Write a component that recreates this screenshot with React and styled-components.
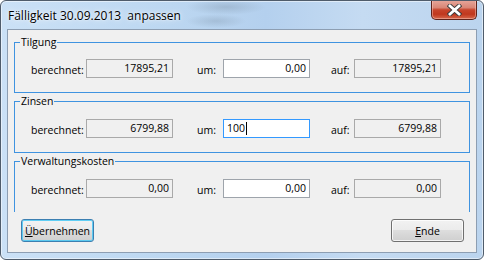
import React from "react";
import styled, { createGlobalStyle } from "styled-components";

const GlobalStyle = createGlobalStyle`
  html, body { margin: 0; padding: 0; background: #ffffff; }
  body { font-family: "Open Sans", "Noto Sans", sans-serif; color: #000; }
  * { box-sizing: border-box; }
`;

const Window = styled.div`
  width: 484px;
  height: 260px;
  display: flex;
  flex-direction: column;
  padding: 0 6px 6px;
  border: 1px solid #4f5c6b;
  border-radius: 6px;
  overflow: hidden;
  background:
    radial-gradient(ellipse 40px 8px at 225px 6px, rgba(120,140,160,0.35), rgba(120,140,160,0) 100%),
    radial-gradient(ellipse 30px 7px at 215px 20px, rgba(120,140,160,0.3), rgba(120,140,160,0) 100%),
    linear-gradient(90deg, #cbe1f6 0%, #bcd7f1 35%, #b4d0ee 55%, #c5dbf2 75%, #bbd4ee 100%);
  box-shadow: inset 0 0 0 1px rgba(255, 255, 255, 0.5);
`;

const TitleBar = styled.div`
  height: 28px;
  display: flex;
  align-items: center;
`;

const Title = styled.div`
  margin-left: 1px;
  margin-top: 1px;
  font-size: 12px;
  white-space: pre;
  text-shadow: 0 0 6px rgba(255, 255, 255, 0.95), 0 0 2px rgba(255, 255, 255, 0.9);
`;

const CloseButton = styled.div`
  margin-left: auto;
  align-self: flex-start;
  margin-top: -1px;
  width: 46px;
  height: 20px;
  display: flex;
  align-items: center;
  justify-content: center;
  border: 1px solid #5e231b;
  border-top: none;
  border-radius: 0 0 5px 5px;
  background: linear-gradient(
    180deg,
    #e7a89c 0%,
    #d98676 40%,
    #c7442b 52%,
    #c0381e 75%,
    #d6684c 100%
  );
  box-shadow: inset 0 0 0 1px rgba(255, 210, 200, 0.45);
`;

const Client = styled.div`
  flex: 1;
  display: flex;
  flex-direction: column;
  border: 1px solid #8d9eb2;
  background: #f0f0f0;
  padding-top: 5px;
`;

const GroupsPanel = styled.div`
  height: 177px;
  overflow: hidden;
  padding: 0 6px;
  display: flex;
  flex-direction: column;
`;

const Group = styled.fieldset`
  margin: 0 0 1px;
  padding: 0;
  min-width: 0;
  border: 1px solid #3f93e0;
  flex-shrink: 0;
`;

const Legend = styled.legend`
  margin-left: 5px;
  padding: 0 1px;
  font-size: 10.5px;
  line-height: 15px;
  height: 15px;
`;

const Row = styled.div`
  display: grid;
  grid-template-columns: 71px 87px 50px 87px 44px 87px;
  align-items: center;
  padding: ${(p) => p.$top}px 0 14px;
`;

const Label = styled.span`
  padding-left: ${(p) => p.$indent}px;
  padding-top: 3px;
  font-size: 10.5px;
  line-height: 14px;
  white-space: nowrap;
`;

const ReadBox = styled.div`
  height: 19px;
  border: 1px solid #a9a9a9;
  background: #f0f0f0;
  text-align: right;
  padding: 0 3px;
  font-size: 10.5px;
  line-height: 16px;
`;

const EditBox = styled.div`
  height: 19px;
  border: 1px solid ${(p) => (p.$focused ? "#3399ff" : "#9ea4ab")};
  background: #ffffff;
  text-align: ${(p) => (p.$left ? "left" : "right")};
  padding: 0 3px;
  font-size: 10.5px;
  line-height: 16px;
  white-space: nowrap;
`;

const Caret = styled.span`
  display: inline-block;
  width: 1px;
  height: 13px;
  background: #000;
  vertical-align: -3px;
  margin-left: 1px;
`;

const ButtonRow = styled.div`
  display: flex;
  justify-content: space-between;
  margin-top: 7px;
  padding: 0 12px 0 13px;
`;

const Button = styled.div`
  width: 73px;
  height: 23px;
  display: flex;
  align-items: center;
  justify-content: center;
  font-size: 10.5px;
  border: 1px solid ${(p) => (p.$default ? "#3c7fb1" : "#707070")};
  border-radius: 3px;
  background: linear-gradient(180deg, #f2f2f2 0%, #ebebeb 49%, #dddddd 50%, #cfcfcf 100%);
  box-shadow: inset 0 0 0 1px
    ${(p) => (p.$default ? "rgba(72, 200, 245, 0.85)" : "rgba(255, 255, 255, 0.75)")};
`;

const Mnemonic = styled.span`
  text-decoration: underline;
  text-underline-offset: 1px;
`;

function CloseIcon() {
  return (
    <svg width="15" height="12" viewBox="0 0 15 12">
      <path d="M3 2 L12 10 M12 2 L3 10" stroke="#3d3d3d" strokeWidth="4.6" strokeLinecap="square" />
      <path d="M3 2 L12 10 M12 2 L3 10" stroke="#ffffff" strokeWidth="2.8" strokeLinecap="square" />
    </svg>
  );
}

const groups = [
  { title: "Tilgung", calc: "17895,21", um: "0,00", auf: "17895,21", top: 9 },
  { title: "Zinsen", calc: "6799,88", um: "100", auf: "6799,88", focused: true, top: 10 },
  { title: "Verwaltungskosten", calc: "0,00", um: "0,00", auf: "0,00", top: 10 },
];

export default function App() {
  return (
    <>
      <GlobalStyle />
      <Window>
        <TitleBar>
          <Title>Fälligkeit 30.09.2013  anpassen</Title>
          <CloseButton>
            <CloseIcon />
          </CloseButton>
        </TitleBar>
        <Client>
          <GroupsPanel>
            {groups.map((g) => (
              <Group key={g.title}>
                <Legend>{g.title}</Legend>
                <Row $top={g.top}>
                  <Label $indent={16}>berechnet:</Label>
                  <ReadBox>{g.calc}</ReadBox>
                  <Label $indent={24}>um:</Label>
                  {g.focused ? (
                    <EditBox $focused $left>
                      {g.um}
                      <Caret />
                    </EditBox>
                  ) : (
                    <EditBox>{g.um}</EditBox>
                  )}
                  <Label $indent={21}>auf:</Label>
                  <ReadBox>{g.auf}</ReadBox>
                </Row>
              </Group>
            ))}
          </GroupsPanel>
          <ButtonRow>
            <Button $default>
              <span>
                <Mnemonic>Ü</Mnemonic>bernehmen
              </span>
            </Button>
            <Button>
              <span>
                <Mnemonic>E</Mnemonic>nde
              </span>
            </Button>
          </ButtonRow>
        </Client>
      </Window>
    </>
  );
}
